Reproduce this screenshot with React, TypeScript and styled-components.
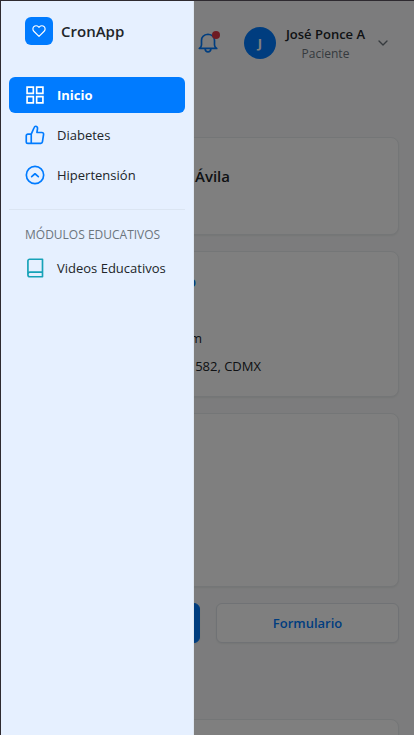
import React from "react";
import styled, { createGlobalStyle } from "styled-components";

const GlobalStyle = createGlobalStyle`
  *, *::before, *::after { box-sizing: border-box; }
  html, body { margin: 0; }
  body {
    background: #f8f9fa;
    color: #212529;
    font-family: "Segoe UI", "Open Sans", "Noto Sans", sans-serif;
    font-size: 14px;
    line-height: 20px;
    overflow: hidden;
  }
  button { font: inherit; cursor: pointer; }
`;

const Frame = styled.div`
  height: 100vh;
  overflow: hidden;
  border-top: 1px solid #2e2a30;
  border-left: 1px solid #2e2a30;
`;

const Header = styled.header`
  display: flex;
  align-items: center;
  justify-content: flex-end;
  gap: 26px;
  height: 84px;
  padding-right: 23px;
`;

const BellButton = styled.button`
  position: relative;
  display: flex;
  padding: 0;
  border: 0;
  background: none;
  color: #007bff;
`;

const BellDot = styled.span`
  position: absolute;
  top: -2px;
  right: -2px;
  width: 8px;
  height: 8px;
  border-radius: 50%;
  background: #dc3545;
`;

const UserButton = styled.button`
  display: flex;
  align-items: center;
  gap: 8px;
  padding: 0;
  border: 0;
  background: none;
  color: #6c757d;
`;

const Avatar = styled.span`
  display: grid;
  place-items: center;
  width: 32px;
  height: 32px;
  border-radius: 50%;
  background: #007bff;
  color: #fff;
  font-size: 13px;
  font-weight: 700;
`;

const UserText = styled.span`
  display: flex;
  flex-direction: column;
  align-items: center;
  min-width: 83px;
  padding-top: 2px;
  font-size: 12px;
  line-height: 19px;
`;

const UserName = styled.strong`
  color: #212529;
  font-size: 13px;
  font-weight: 600;
`;

const Main = styled.main`
  display: flex;
  flex-direction: column;
  gap: 16px;
  padding: 52px 15px 0 16px;
`;

const Card = styled.section<{ $height: number }>`
  min-height: ${(p) => p.$height}px;
  padding: 20px 24px;
  border: 1px solid #e9ecef;
  border-radius: 8px;
  background: #fff;
  box-shadow: 0 1px 2px rgba(0, 0, 0, 0.06);
`;

const PatientName = styled.h2`
  width: 188px;
  margin: 7px 0 0;
  font-size: 15px;
  font-weight: 600;
  line-height: 22px;
  text-align: right;
  white-space: nowrap;
`;

const CardTitle = styled.h3`
  width: 154px;
  margin: 0 0 36px;
  color: #007bff;
  font-size: 14px;
  font-weight: 600;
  text-align: right;
`;

const InfoLine = styled.p<{ $width: number }>`
  width: ${(p) => p.$width}px;
  margin: 0 0 8px;
  font-size: 13px;
  text-align: right;

  &:last-child {
    margin-bottom: 0;
  }
`;

const Actions = styled.div`
  display: grid;
  grid-template-columns: 1fr 1fr;
  gap: 16px;
  margin-bottom: 60px;
`;

const ActionButton = styled.button<{ $primary?: boolean }>`
  height: 40px;
  border: 1px solid ${(p) => (p.$primary ? "#007bff" : "#e0e4ea")};
  border-radius: 6px;
  background: ${(p) => (p.$primary ? "#007bff" : "#fff")};
  color: ${(p) => (p.$primary ? "#fff" : "#007bff")};
  font-size: 13px;
  font-weight: 600;
  box-shadow: 0 1px 2px rgba(0, 0, 0, 0.06);
`;

const Overlay = styled.div`
  position: fixed;
  inset: 1px 0 0 1px;
  background: rgba(0, 0, 0, 0.5);
`;

const Drawer = styled.aside`
  position: fixed;
  top: 1px;
  bottom: 0;
  left: 1px;
  width: 193px;
  padding: 16px 8px;
  border-right: 1px solid #dee7f2;
  background: #e6f0ff;
`;

const Brand = styled.div`
  display: flex;
  align-items: center;
  gap: 8px;
  padding: 0 16px;
  margin-bottom: 32px;
  font-size: 15px;
  font-weight: 600;
`;

const BrandMark = styled.span`
  display: grid;
  place-items: center;
  width: 28px;
  height: 28px;
  border-radius: 6px;
  background: #007bff;
  color: #fff;
`;

const Nav = styled.nav`
  display: flex;
  flex-direction: column;
  gap: 4px;
`;

const NavLink = styled.a<{ $active?: boolean; $teal?: boolean }>`
  display: flex;
  align-items: center;
  gap: 12px;
  height: 36px;
  padding: 0 16px;
  border-radius: 6px;
  background: ${(p) => (p.$active ? "#007bff" : "transparent")};
  color: ${(p) => (p.$active ? "#fff" : "#212529")};
  font-size: 13px;
  font-weight: ${(p) => (p.$active ? 700 : 400)};
  text-decoration: none;
  white-space: nowrap;

  svg {
    flex: none;
    color: ${(p) => (p.$active ? "#fff" : p.$teal ? "#17a2b8" : "#007bff")};
  }
`;

const Divider = styled.hr`
  width: 100%;
  height: 1px;
  margin: 12px 0;
  border: 0;
  background: #dbe5f2;
`;

const SectionTitle = styled.h2`
  margin: 0 0 2px;
  padding: 0 16px;
  color: #6c757d;
  font-size: 12px;
  font-weight: 500;
  line-height: 18px;
  text-transform: uppercase;
  white-space: nowrap;
`;

type IconProps = { size?: number; stroke?: number; children: React.ReactNode };

const Icon = ({ size = 20, stroke = 2, children }: IconProps) => (
  <svg
    width={size}
    height={size}
    viewBox="0 0 24 24"
    fill="none"
    stroke="currentColor"
    strokeWidth={stroke}
    strokeLinecap="round"
    strokeLinejoin="round"
    aria-hidden="true"
  >
    {children}
  </svg>
);

const GridIcon = () => (
  <Icon>
    <path
      strokeLinejoin="miter"
      d="M2.500 2.500h7.500v7.500h-7.500zM14 2.500h7.500v7.500h-7.500zM14 14h7.500v7.500h-7.500zM2.500 14h7.500v7.500h-7.500z"
    />
  </Icon>
);

const ThumbIcon = () => (
  <Icon>
    <path d="M7.500 11v11M3.500 11h4l3.500-8c.400-1 1-1.500 1.700-1.500 1.600 0 2.600 1.200 2.300 3L14.300 9h6a2 2 0 0 1 2 2.300l-1.400 9a2 2 0 0 1-2 1.700H3.500a2 2 0 0 1-2-2v-7a2 2 0 0 1 2-2z" />
  </Icon>
);

const CircleUpIcon = () => (
  <Icon>
    <circle cx="12" cy="12" r="10.400" />
    <path d="M8 14l4-3.500 4 3.500" />
  </Icon>
);

const BookIcon = () => (
  <Icon>
    <path d="M3.500 19.500V3.500a2 2 0 0 1 2-2H21v21H6a2.500 2.500 0 0 1-2.500-2.500v-.500A2.500 2.500 0 0 1 6 17h15" />
  </Icon>
);

const HeartIcon = () => (
  <Icon size={14}>
    <path d="M20.840 4.610a5.500 5.500 0 0 0-7.780 0L12 5.670l-1.060-1.060a5.500 5.500 0 0 0-7.780 7.780L12 21.230l8.840-8.840a5.500 5.500 0 0 0 0-7.780z" />
  </Icon>
);

const BellIcon = () => (
  <Icon>
    <path d="M1.500 18.500h21c-1.800-1-2.700-2.200-2.700-4V9c0-4-3-7-7.800-7.500C7.200 2 4.200 5 4.200 9v5.500c0 1.800-.900 3-2.700 4zM8.500 19c.300 2.400 1.500 3.700 3.500 3.700s3.200-1.300 3.500-3.700" />
  </Icon>
);

const ChevronDown = () => (
  <Icon size={16}>
    <path d="M6 9l6 6 6-6" />
  </Icon>
);

export default function App() {
  return (
    <>
      <GlobalStyle />
      <Frame>
        <Header>
          <BellButton aria-label="Notificaciones">
            <BellIcon />
            <BellDot />
          </BellButton>
          <UserButton>
            <Avatar>J</Avatar>
            <UserText>
              <UserName>José Ponce A</UserName>
              Paciente
            </UserText>
            <ChevronDown />
          </UserButton>
        </Header>
        <Main>
          <Card $height={98}>
            <PatientName>Ávila</PatientName>
          </Card>
          <Card $height={146}>
            <CardTitle>o</CardTitle>
            <InfoLine $width={160}>m</InfoLine>
            <InfoLine $width={219}>582, CDMX</InfoLine>
          </Card>
          <Card $height={174} />
          <Actions>
            <ActionButton $primary aria-label="Consulta" />
            <ActionButton>Formulario</ActionButton>
          </Actions>
          <Card $height={98} />
        </Main>
      </Frame>
      <Overlay />
      <Drawer>
        <Brand>
          <BrandMark>
            <HeartIcon />
          </BrandMark>
          CronApp
        </Brand>
        <Nav>
          <NavLink href="#inicio" $active aria-current="page">
            <GridIcon />
            Inicio
          </NavLink>
          <NavLink href="#diabetes">
            <ThumbIcon />
            Diabetes
          </NavLink>
          <NavLink href="#hipertension">
            <CircleUpIcon />
            Hipertensión
          </NavLink>
          <Divider />
          <SectionTitle>Módulos educativos</SectionTitle>
          <NavLink href="#videos" $teal>
            <BookIcon />
            Videos Educativos
          </NavLink>
        </Nav>
      </Drawer>
    </>
  );
}
